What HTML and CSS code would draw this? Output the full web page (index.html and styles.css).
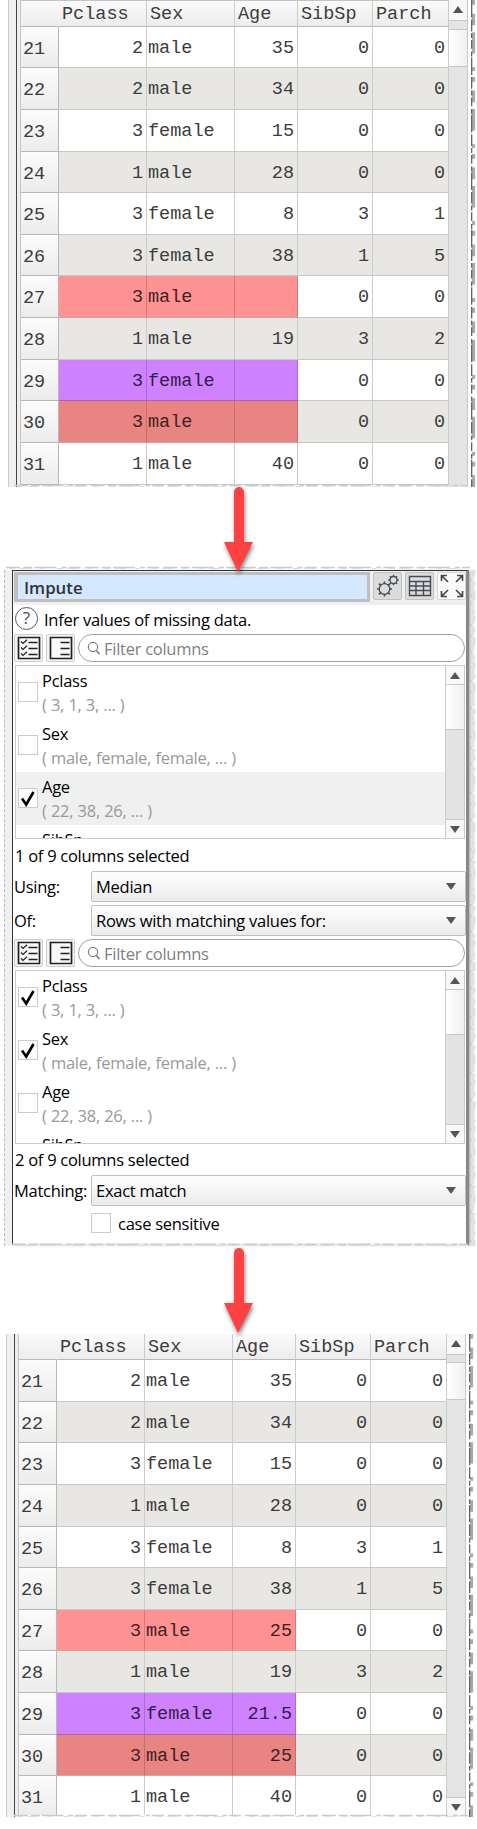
FILE: index.html
```
<!DOCTYPE html>
<html lang="en">
<head>
<meta charset="utf-8">
<title>Impute</title>
<link rel="stylesheet" href="styles.css">
</head>
<body>
<svg class="defs" width="0" height="0">
  <symbol id="arrow" viewBox="0 0 40 96"><path d="M15 10a5 5 0 0 1 10 0V60H34L19 90 5 60H15Z" fill="#ff4141"/></symbol>
  <symbol id="check" viewBox="0 0 20 20"><path d="M4 10.500 8.200 16.500 15.500 4" fill="none" stroke="#000" stroke-width="2.600"/></symbol>
  <symbol id="all" viewBox="0 0 24 24"><path d="M1.500 1.500H22.500V22.500H1.500Z" fill="#f8f8f8" stroke="#222" stroke-width="1.700"/><path d="M11.500 6.500H20.500M11.500 12.500H20.500M11.500 18.500H20.500" stroke="#222" stroke-width="1.500"/><path d="M4 5.500 6 7.500 10 3.700M4 11.500 6 13.500 10 9.700M4 17.500 6 19.500 10 15.700" fill="none" stroke="#222" stroke-width="1.200"/></symbol>
  <symbol id="none" viewBox="0 0 24 24"><path d="M1.500 1.500H22.500V22.500H1.500Z" fill="#f8f8f8" stroke="#222" stroke-width="1.700"/><path d="M11.500 6.500H20.500M11.500 12.500H20.500M11.500 18.500H20.500" stroke="#222" stroke-width="1.500"/></symbol>
  <symbol id="lens" viewBox="0 0 14 14"><circle cx="6" cy="6" r="4.700" fill="none" stroke="#666"/><path d="M9.300 9.500 12.500 13" stroke="#666" stroke-width="1.200"/></symbol>
  <symbol id="ragV" viewBox="0 0 6 700" preserveAspectRatio="none"><path d="M2.500 0V700" stroke="#e2e2e2" stroke-width="4" stroke-dasharray="9 2 14 3 6 1 21 2"/><path d="M4.300 0V700" stroke="#ddd" stroke-width="2" stroke-dasharray="5 8 3 6 9 11 2 4"/></symbol>
  <symbol id="ragT" viewBox="0 0 6 500" preserveAspectRatio="none"><path d="M2.600 0V500" stroke="#aaa" stroke-width="3" stroke-dasharray="5 9 12 7 22 14 4 6"/><path d="M.7 0V500" stroke="#555" stroke-width="1.200" stroke-dasharray="18 2 12 2 5 2 9 3 5 1"/></symbol>
  <symbol id="ragH" viewBox="0 0 460 4" preserveAspectRatio="none"><path d="M0 1.500H460" stroke="#ccc" stroke-width="1.300" stroke-dasharray="14 3 9 2 22 5 5 2 12 4"/><path d="M3 2.500H457" stroke="#ddd" stroke-dasharray="6 5 11 9 4 12"/></symbol>
</svg>

<section class="sheet sheet-before">
  <div class="gutter"></div>
  <div class="grid">
    <div class="row head"><b class="n"></b><b class="p">Pclass</b><b class="s">Sex</b><b class="a">Age</b><b class="c">SibSp</b><b class="h">Parch</b></div>
    <div class="row"><b class="n">21</b><i class="p">2</i><i class="s">male</i><i class="a">35</i><i class="c">0</i><i class="h">0</i></div>
    <div class="row alt"><b class="n">22</b><i class="p">2</i><i class="s">male</i><i class="a">34</i><i class="c">0</i><i class="h">0</i></div>
    <div class="row"><b class="n">23</b><i class="p">3</i><i class="s">female</i><i class="a">15</i><i class="c">0</i><i class="h">0</i></div>
    <div class="row alt"><b class="n">24</b><i class="p">1</i><i class="s">male</i><i class="a">28</i><i class="c">0</i><i class="h">0</i></div>
    <div class="row"><b class="n">25</b><i class="p">3</i><i class="s">female</i><i class="a">8</i><i class="c">3</i><i class="h">1</i></div>
    <div class="row alt"><b class="n">26</b><i class="p">3</i><i class="s">female</i><i class="a">38</i><i class="c">1</i><i class="h">5</i></div>
    <div class="row red"><b class="n">27</b><i class="p">3</i><i class="s">male</i><i class="a"></i><i class="c">0</i><i class="h">0</i></div>
    <div class="row alt"><b class="n">28</b><i class="p">1</i><i class="s">male</i><i class="a">19</i><i class="c">3</i><i class="h">2</i></div>
    <div class="row violet"><b class="n">29</b><i class="p">3</i><i class="s">female</i><i class="a"></i><i class="c">0</i><i class="h">0</i></div>
    <div class="row alt red"><b class="n">30</b><i class="p">3</i><i class="s">male</i><i class="a"></i><i class="c">0</i><i class="h">0</i></div>
    <div class="row"><b class="n">31</b><i class="p">1</i><i class="s">male</i><i class="a">40</i><i class="c">0</i><i class="h">0</i></div>
  </div>
  <div class="sheet-bar"><span class="tri up"></span><span class="sheet-thumb"></span></div>
  <svg class="torn-right"><use href="#ragT"/></svg>
  <svg class="torn-bottom"><use href="#ragH"/></svg>
</section>

<svg class="arrow arrow-in"><use href="#arrow"/></svg>

<section class="impute">
  <svg class="torn-top"><use href="#ragH"/></svg>
  <div class="window">
    <header class="title-row">
      <div class="title"><span>Impute</span></div>
      <div class="tool"><svg width="24" height="24" viewBox="0 0 24 24" fill="none" stroke="#444b56" stroke-width="1.300"><circle cx="8.500" cy="15" r="5.300"/><path d="M8.500 9.700V7.500M8.500 20.300V22.500M3.200 15H1M13.800 15H16M4.700 11.300 3 9.700M12.300 11.300 14 9.700M4.700 18.700 3 20.300M12.300 18.700 14 20.300" stroke-width="1.700"/><circle cx="17.500" cy="6" r="3.500"/><path d="M17.500 2.500V.8M17.500 9.500V11.200M14 6H12.300M21 6H22.700M15 3.500 13.900 2.300M20 3.500 21.100 2.300M15 8.500 13.900 9.700M20 8.500 21.100 9.700" stroke-width="1.400"/></svg></div>
      <div class="tool"><svg width="24" height="24" viewBox="0 0 24 24" fill="none" stroke="#444b56" stroke-width="1.400"><path d="M1.500 2.500H22.500V21.500H1.500ZM1.500 7.500H22.500M1.500 12H22.500M1.500 16.500H22.500M8 7.500V21.500M15.500 7.500V21.500"/></svg></div>
      <div class="tool plain"><svg width="26" height="26" viewBox="0 0 26 26" fill="none" stroke="#444b56" stroke-width="1.700"><path d="M9 9 2.500 2.500M2.500 8V2.500H8M17 9 23.500 2.500M18 2.500H23.500V8M9 17 2.500 23.500M2.500 18V23.500H8M17 17 23.500 23.500M18 23.500H23.500V18"/></svg></div>
    </header>
    <div class="info"><span class="help">?</span><span class="t t-info">Infer values of missing data.</span></div>
    <div class="filter"><div class="mini"><svg><use href="#all"/></svg></div><div class="mini"><svg><use href="#none"/></svg></div><div class="search"><svg><use href="#lens"/></svg><span class="t">Filter columns</span></div></div>
    <div class="list">
      <div class="items">
        <div class="item"><span class="box"></span><div><p class="t">Pclass</p><p class="t dim">( 3, 1, 3, ... )</p></div></div>
        <div class="item"><span class="box"></span><div><p class="t">Sex</p><p class="t dim">( male, female, female, ... )</p></div></div>
        <div class="item current"><span class="box"><svg><use href="#check"/></svg></span><div><p class="t">Age</p><p class="t dim">( 22, 38, 26, ... )</p></div></div>
        <div class="item"><div class="cut"><p class="t">SibSp</p></div></div>
      </div>
      <div class="bar"><span class="btn"><span class="tri up"></span></span><span class="thumb"></span><span class="btn down"><span class="tri"></span></span></div>
    </div>
    <p class="t status status-target">1 of 9 columns selected</p>
    <div class="field"><label class="t">Using:</label><div class="select"><span class="t">Median</span><span class="tri"></span></div></div>
    <div class="field"><label class="t">Of:</label><div class="select"><span class="t">Rows with matching values for:</span><span class="tri"></span></div></div>
    <div class="filter"><div class="mini"><svg><use href="#all"/></svg></div><div class="mini"><svg><use href="#none"/></svg></div><div class="search"><svg><use href="#lens"/></svg><span class="t">Filter columns</span></div></div>
    <div class="list">
      <div class="items">
        <div class="item"><span class="box"><svg><use href="#check"/></svg></span><div><p class="t">Pclass</p><p class="t dim">( 3, 1, 3, ... )</p></div></div>
        <div class="item"><span class="box"><svg><use href="#check"/></svg></span><div><p class="t">Sex</p><p class="t dim">( male, female, female, ... )</p></div></div>
        <div class="item"><span class="box"></span><div><p class="t">Age</p><p class="t dim">( 22, 38, 26, ... )</p></div></div>
        <div class="item"><div class="cut"><p class="t">SibSp</p></div></div>
      </div>
      <div class="bar"><span class="btn"><span class="tri up"></span></span><span class="thumb"></span><span class="btn down"><span class="tri"></span></span></div>
    </div>
    <p class="t status">2 of 9 columns selected</p>
    <div class="field"><label class="t">Matching:</label><div class="select"><span class="t">Exact match</span><span class="tri"></span></div></div>
    <div class="case"><span class="box"></span><span class="t">case sensitive</span></div>
  </div>
  <svg class="torn-right"><use href="#ragV"/></svg>
  <svg class="torn-bottom"><use href="#ragH"/></svg>
</section>

<svg class="arrow arrow-out"><use href="#arrow"/></svg>

<section class="sheet sheet-after">
  <div class="gutter"></div>
  <div class="grid">
    <div class="row head"><b class="n"></b><b class="p">Pclass</b><b class="s">Sex</b><b class="a">Age</b><b class="c">SibSp</b><b class="h">Parch</b></div>
    <div class="row"><b class="n">21</b><i class="p">2</i><i class="s">male</i><i class="a">35</i><i class="c">0</i><i class="h">0</i></div>
    <div class="row alt"><b class="n">22</b><i class="p">2</i><i class="s">male</i><i class="a">34</i><i class="c">0</i><i class="h">0</i></div>
    <div class="row"><b class="n">23</b><i class="p">3</i><i class="s">female</i><i class="a">15</i><i class="c">0</i><i class="h">0</i></div>
    <div class="row alt"><b class="n">24</b><i class="p">1</i><i class="s">male</i><i class="a">28</i><i class="c">0</i><i class="h">0</i></div>
    <div class="row"><b class="n">25</b><i class="p">3</i><i class="s">female</i><i class="a">8</i><i class="c">3</i><i class="h">1</i></div>
    <div class="row alt"><b class="n">26</b><i class="p">3</i><i class="s">female</i><i class="a">38</i><i class="c">1</i><i class="h">5</i></div>
    <div class="row red"><b class="n">27</b><i class="p">3</i><i class="s">male</i><i class="a">25</i><i class="c">0</i><i class="h">0</i></div>
    <div class="row alt"><b class="n">28</b><i class="p">1</i><i class="s">male</i><i class="a">19</i><i class="c">3</i><i class="h">2</i></div>
    <div class="row violet"><b class="n">29</b><i class="p">3</i><i class="s">female</i><i class="a">21.5</i><i class="c">0</i><i class="h">0</i></div>
    <div class="row alt red"><b class="n">30</b><i class="p">3</i><i class="s">male</i><i class="a">25</i><i class="c">0</i><i class="h">0</i></div>
    <div class="row"><b class="n">31</b><i class="p">1</i><i class="s">male</i><i class="a">40</i><i class="c">0</i><i class="h">0</i></div>
  </div>
  <div class="sheet-bar"><span class="tri up"></span><span class="sheet-thumb"></span><span class="sheet-down"><span class="tri"></span></span></div>
  <svg class="torn-right"><use href="#ragT"/></svg>
  <svg class="torn-bottom"><use href="#ragH"/></svg>
</section>
</body>
</html>
```

FILE: styles.css
```
* { box-sizing: border-box; }
body { margin: 0; background: #fff; color: #000; width: 477px; height: 1829px; overflow: hidden; font-family: "Open Sans", "Noto Sans", sans-serif; }
p { margin: 0; }
svg { display: block; flex: none; }
.defs { position: absolute; }

/* Data sheets */
.sheet { display: flex; position: relative; width: 477px; font: 18.500px/22px "Liberation Mono", monospace; color: #3c3c3c; }
.sheet-before { height: 487px; padding-left: 8px; }
.sheet-after { height: 483px; padding-left: 6px; }
.gutter { flex: none; width: 12px; background: linear-gradient(90deg, #ccc 0 1px, #eee 1px 2px, #f0f0f0 2px 8px, #444 8px 9px, #eee 9px); }
.grid { width: 429px; border-left: 1px solid #c4c4c4; overflow: hidden; background: #fff; flex: none; }
.sheet-before .grid { border-top: 1px solid #c4c4c4; height: 486px; }
.row { display: flex; height: 41.630px; }
.row > * { flex: none; font-style: normal; font-weight: normal; border-right: 1px solid #ccc; border-bottom: 1px solid #c8c8c8; padding: 11px 3px 0 2px; height: 100%; }
.n { width: 38px; }
.p, .s { width: 88px; }
.a { width: 63px; }
.c { width: 75px; }
.h { width: 76px; }
.row i { text-align: right; }
.row i.s { text-align: left; padding-left: 1px; }
.row b.n { padding: 12px 0 0 2px; background: linear-gradient(#fcfcfc, #ececec); border-color: #b8b8b8; }
.alt i { background: #e8e7e3; }
.head { height: 25.700px; background: linear-gradient(#fafafa, #ececec); }
.sheet-after .head { height: 26px; }
.row.head > b { padding: 3px 0 0 3px; border-bottom-color: #b8b8b8; }
.row.head > .n { background: none; border-right-color: transparent; }
.red .p, .red .s, .red .a { background: #ff9292; border-right-color: #d57a7a; border-bottom-color: #d9a0a0; color: #401f24; }
.red.alt .p, .red.alt .s, .red.alt .a { background: #e88482; border-right-color: #c46e6e; border-bottom-color: #d8a4a2; }
.violet .p, .violet .s, .violet .a { background: #cf82ff; border-right-color: #ab6cd4; border-bottom-color: #a860b0; color: #321d48; }
.sheet-bar { width: 19px; flex: none; background: #e4e4e4; border-right: 1px solid #c8c8c8; display: flex; flex-direction: column; align-items: center; position: relative; }
.sheet-bar > .tri.up { margin-top: 6px; box-sizing: content-box; }
.sheet-bar::before { content: ""; position: absolute; inset: 0 0 auto; height: 20px; background: #f8f8f8; border-bottom: 1px solid #c8c8c8; }
.sheet-bar .tri { position: relative; }
.sheet-thumb { width: 100%; height: 38px; margin-top: 16px; background: linear-gradient(90deg, #fff, #f0f0f0); border: solid #c8c8c8; border-width: 1px 0; flex: none; }
.sheet-after .sheet-thumb { margin-top: 15px; }
.sheet-down { margin-top: auto; width: 100%; height: 20px; background: #f8f8f8; border-top: 1px solid #c8c8c8; display: flex; justify-content: center; padding-top: 6px; }
.sheet-after .grid { height: 481px; }
.sheet .torn-right { width: 6px; height: 487px; margin-left: 3px; }
.sheet-after .torn-right { height: 483px; }
.sheet .torn-bottom { position: absolute; left: 14px; bottom: -1px; width: 454px; height: 4px; }

.tri { width: 0; height: 0; border: solid transparent; border-width: 7px 5.500px 0; border-top-color: #555; }
.tri.up { border-width: 0 5.500px 7px; border-bottom-color: #555; }

/* Flow arrows */
.arrow { width: 40px; height: 96px; margin-left: 219px; position: relative; z-index: 2; filter: drop-shadow(1px 3px 2px #0007); }
.arrow-in { margin-top: -5px; margin-bottom: -12px; }
.arrow-out { margin-top: -3px; margin-bottom: -5px; }

/* Impute panel */
.impute { position: relative; display: flex; width: 477px; height: 680px; padding: 4px 0 0 4px; }
.impute::before { content: ""; width: 7px; height: 676px; flex: none; background: #f0f0f0; border-left: 1px dashed #bbb; }
.window { width: 457px; height: 676px; flex: none; border: solid #333; border-width: 1px 3px 0 1px; border-right-color: #888; box-shadow: 4px 0 3px -1px #bbb; background: #fff; border-bottom: 3px solid #eee; }
.torn-top { position: absolute; left: 6px; top: 0; width: 464px; height: 4px; }
.impute .torn-right { width: 6px; height: 676px; margin-left: 1px; }
.impute .torn-bottom { position: absolute; left: 12px; bottom: -1px; width: 455px; height: 4px; }
.t { font-size: 16.500px; line-height: 22px; letter-spacing: -0.270px; white-space: pre; }
.title-row { height: 34px; display: flex; background: #f0f0f0; padding: 1px 0 0 1px; gap: 3px; }
.title { width: 357px; height: 30px; border: 3px solid #bfbfbf; border-left-width: 4px; background: #d4e8ff; color: #333; font-size: 16.800px; font-weight: 600; line-height: 26px; padding-left: 6px; }
.tool { width: 29px; height: 28px; background: #dcdcdc; border: 1px solid #c0c0c0; border-radius: 2px; display: grid; place-items: center; }
.tool.plain { background: #fafafa; border-color: #d4d4d4; }
.tool svg { max-width: 27px; }
.info { height: 29px; display: flex; gap: 6px; padding: 2px 0 0 2px; }
.help { width: 23px; height: 23px; border: 1.500px solid #555b66; border-radius: 50%; text-align: center; font-size: 17px; line-height: 20px; color: #444b56; }
.t-info { padding-top: 2px; }
.filter { display: flex; gap: 3px; padding-left: 1px; height: 28px; }
.mini { width: 29px; height: 28px; border: 1px solid #ccc; border-radius: 2px; background: #f4f4f4; display: grid; place-items: center; }
.mini svg { width: 24px; height: 24px; }
.search { width: 387px; height: 28px; border: 1px solid #a0a0a0; border-radius: 14px; display: flex; padding: 3px 0 0 8px; gap: 3px; color: #808080; }
.search svg { width: 14px; height: 14px; margin-top: 3px; }
.list { margin: 3px 0 0 2px; width: 450px; height: 174px; border: 1px solid #ccc; display: flex; overflow: hidden; }
.items { width: 429px; height: 172px; overflow: hidden; flex: none; }
.item { height: 53px; display: flex; gap: 4px; padding-left: 2px; }
.item p:first-child { margin-top: 4px; }
.item p.dim { margin-top: 2px; }
.item .cut { padding-left: 24px; }
.dim { color: #999; word-spacing: 0.300px; }
.current { background: #f0f0f0; }
.box { width: 20px; height: 20px; border: 1px solid #ccc; background: #fff; flex: none; }
.box svg { width: 20px; height: 20px; margin: -1px; }
.item .box { margin-top: 16px; }
.bar { width: 19px; border-left: 1px solid #ccc; background: #e3e3e3; display: flex; flex-direction: column; flex: none; }
.btn { height: 19px; background: #f8f8f8; border-bottom: 1px solid #c8c8c8; display: grid; place-items: center; flex: none; }
.btn.down { margin-top: auto; border-bottom: 0; border-top: 1px solid #c8c8c8; }
.thumb { height: 45px; background: linear-gradient(90deg, #fff, #f0f0f0); border-bottom: 1px solid #c8c8c8; flex: none; }
.status { height: 31px; padding: 5px 0 0 2px; }
.status-target { height: 32px; padding-top: 6px; }
.field { display: flex; height: 34px; padding-left: 1px; }
.field label { width: 77px; flex: none; padding-top: 5px; }
.select { width: 375px; height: 31px; border: 1px solid #c0c0c0; border-radius: 2px; background: linear-gradient(#fff, #ebebeb); display: flex; justify-content: space-between; padding: 4px 9px 0 4px; }
.select .tri { margin-top: 7px; }
.case { display: flex; padding: 4px 0 0 78px; gap: 7px; }
```
